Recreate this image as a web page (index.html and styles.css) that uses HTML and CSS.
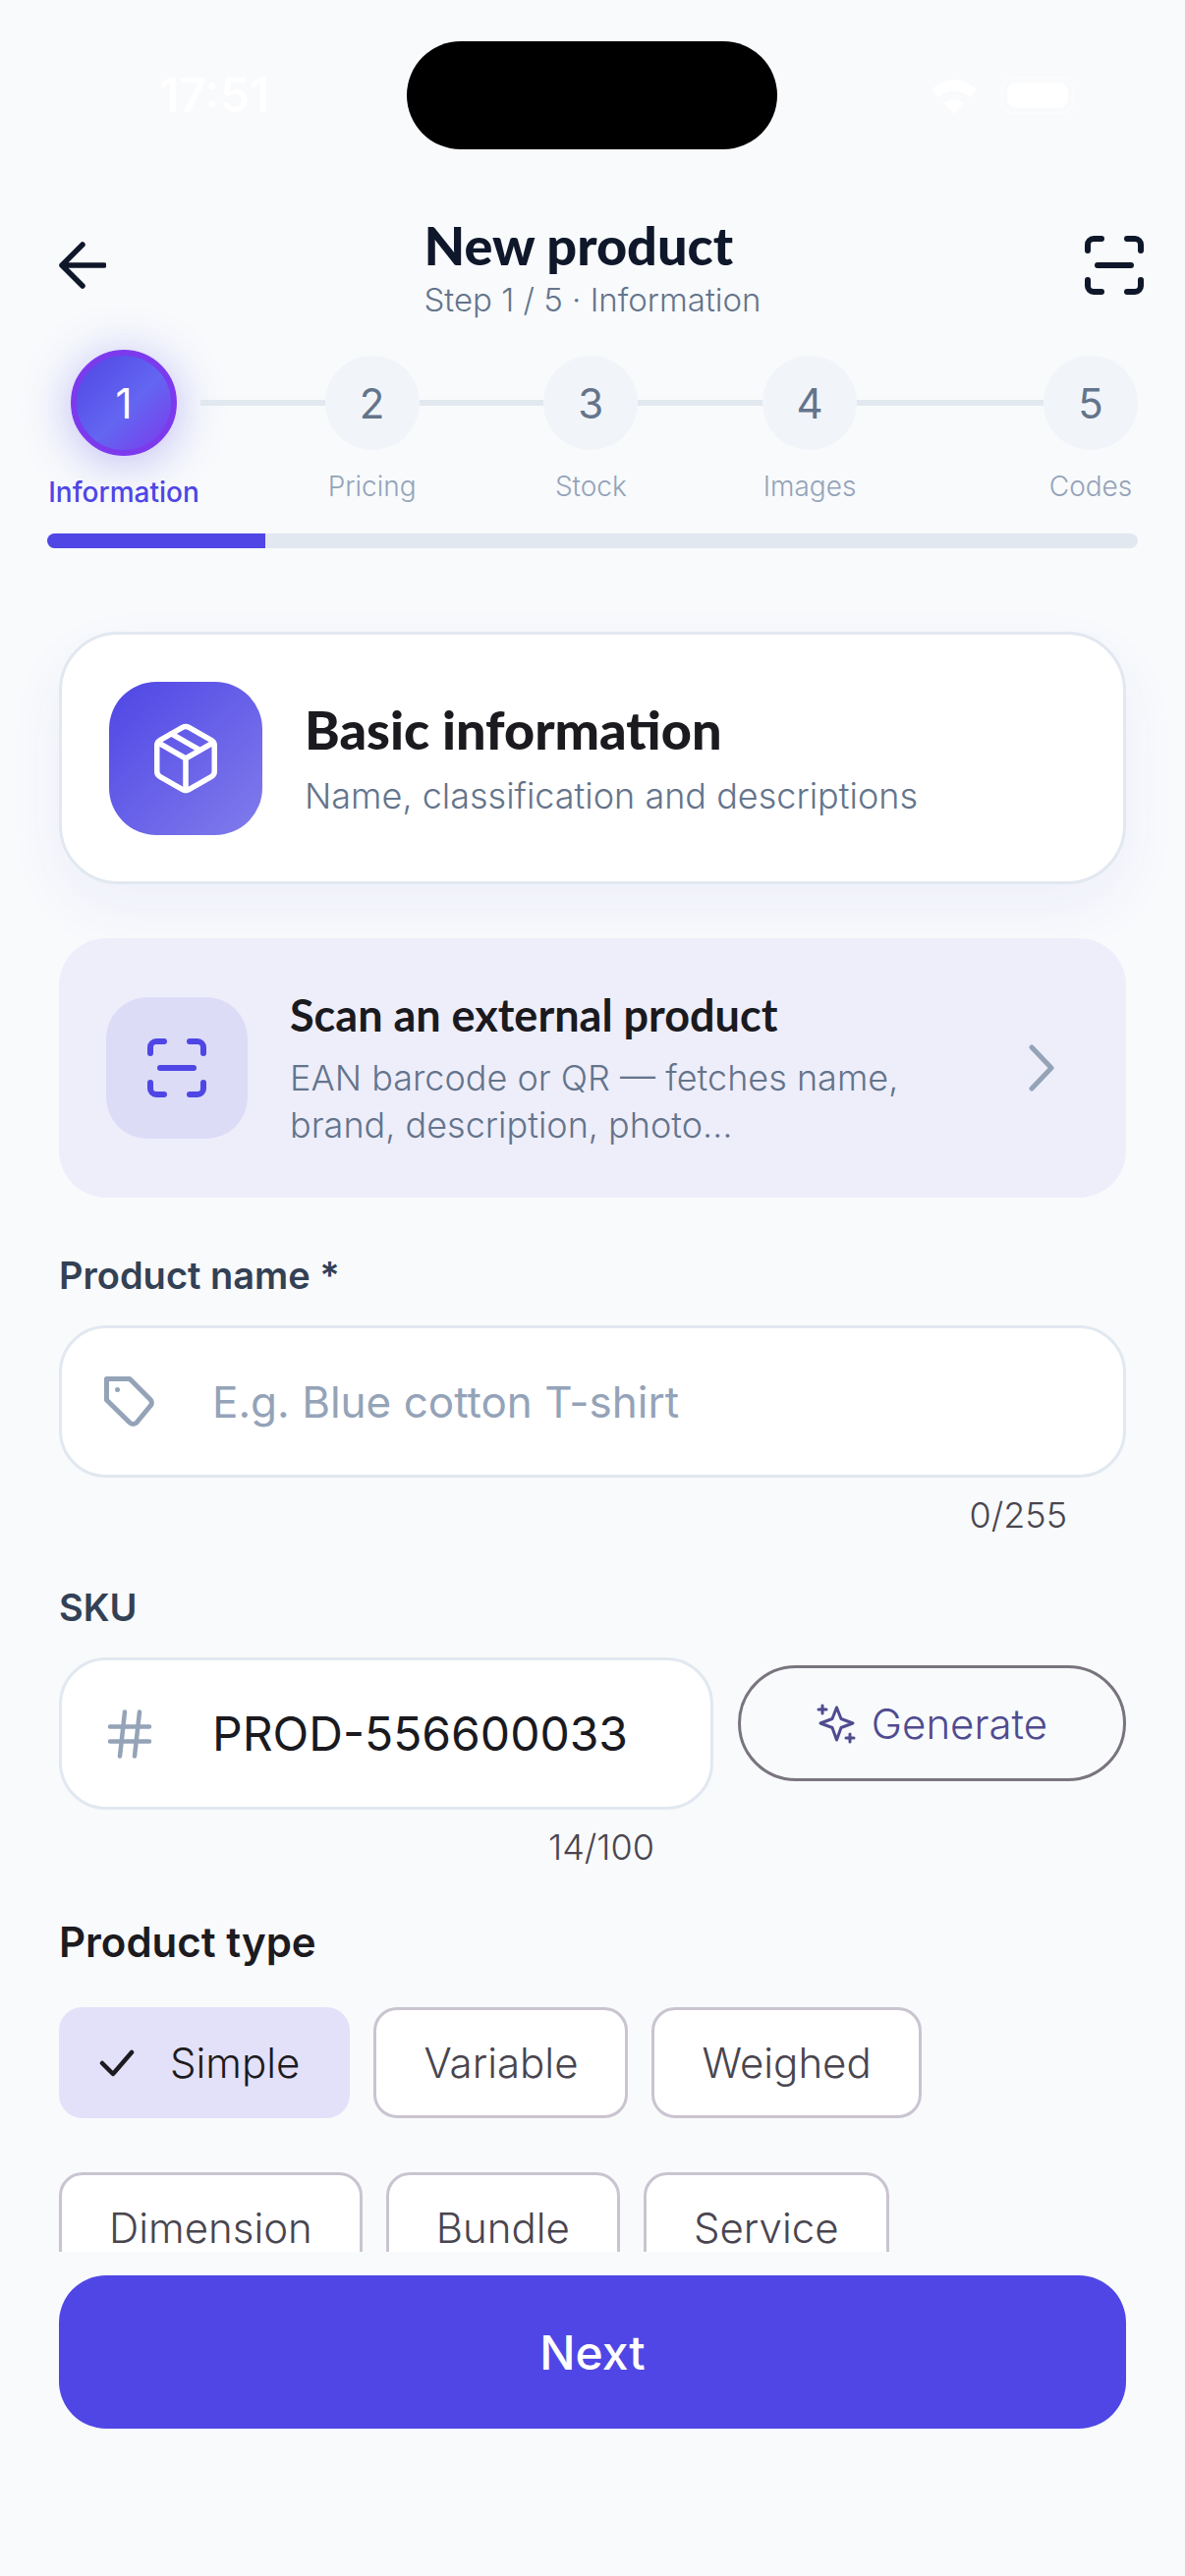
FILE: index.html
```html
<!DOCTYPE html>
<html lang="en">
<head>
    <meta charset="UTF-8">
    <meta name="viewport" content="width=device-width, initial-scale=1.0">
    <title>New product</title>
    <link rel="stylesheet" href="styles.css">
</head>
<body>
<div class="app">

    <div class="status">
        <span class="time">17:51</span>
        <div class="island"></div>
        <svg class="wifi" viewBox="0 0 50 38"><path d="M25 38 15 27q10-8 20 0zM9 21 2 13q23-20 46 0l-7 8q-16-13-32 0z" fill="#fff"/></svg>
        <div class="battery"><div class="battery-fill"></div></div>
    </div>

    <header class="topbar">
        <svg class="back" viewBox="0 0 48 48" fill="none" stroke="#0f172a" stroke-width="5.5" stroke-linecap="round" stroke-linejoin="round"><path d="M46 24H3M24 3 3 24l21 21"/></svg>
        <div class="titles">
            <h1>New product</h1>
            <p>Step 1 / 5 · Information</p>
        </div>
        <svg class="scan scan-top" viewBox="0 0 60 60" fill="none" stroke="currentColor" stroke-width="6" stroke-linecap="round"><path d="M3 15V9a6 6 0 0 1 6-6h8M43 3h8a6 6 0 0 1 6 6v6M57 45v6a6 6 0 0 1-6 6h-8M17 57H9a6 6 0 0 1-6-6v-6M13 30h34"/></svg>
    </header>

    <div class="steps">
        <div class="step step-on"><div class="dot">1</div><span>Information</span></div>
        <div class="line"></div>
        <div class="step"><div class="dot">2</div><span>Pricing</span></div>
        <div class="line"></div>
        <div class="step"><div class="dot">3</div><span>Stock</span></div>
        <div class="line"></div>
        <div class="step"><div class="dot">4</div><span>Images</span></div>
        <div class="line line-long"></div>
        <div class="step"><div class="dot">5</div><span>Codes</span></div>
    </div>
    <div class="progress"><div class="progress-fill"></div></div>

    <main class="content">
        <section class="intro">
            <div class="intro-icon">
                <svg viewBox="0 0 24 24" fill="none" stroke="#fff" stroke-width="1.7" stroke-linecap="round" stroke-linejoin="round"><path d="M21 8a2 2 0 0 0-1-1.73l-7-4a2 2 0 0 0-2 0l-7 4A2 2 0 0 0 3 8v8a2 2 0 0 0 1 1.73l7 4a2 2 0 0 0 2 0l7-4A2 2 0 0 0 21 16Z"/><path d="m3.3 7 8.7 5 8.7-5M12 22V12M7.5 4.27l9 5.15"/></svg>
            </div>
            <div>
                <h2>Basic information</h2>
                <p>Name, classification and descriptions</p>
            </div>
        </section>

        <section class="scan-card">
            <div class="scan-icon">
                <svg class="scan" viewBox="0 0 60 60" fill="none" stroke="currentColor" stroke-width="6" stroke-linecap="round"><path d="M3 15V9a6 6 0 0 1 6-6h8M43 3h8a6 6 0 0 1 6 6v6M57 45v6a6 6 0 0 1-6 6h-8M17 57H9a6 6 0 0 1-6-6v-6M13 30h34"/></svg>
            </div>
            <div class="scan-text">
                <h3>Scan an external product</h3>
                <p>EAN barcode or QR — fetches name,<br>brand, description, photo…</p>
            </div>
            <svg class="chevron" viewBox="0 0 28 48" fill="none" stroke="#94a3b8" stroke-width="5" stroke-linecap="round" stroke-linejoin="round"><path d="M4 3l20 21L4 45"/></svg>
        </section>

        <label class="label">Product name *</label>
        <div class="input">
            <svg class="input-icon" viewBox="0 0 60 60" fill="none" stroke="#94a3b8" stroke-width="5" stroke-linejoin="round"><path d="M6.5 6.5H30L51 27.5a4.500 4.500 0 0 1 0 6.500L37 51a5 5 0 0 1-7 0L6.500 28Z"/><circle cx="17.500" cy="17.500" r="2.500" fill="#94a3b8" stroke="none"/></svg>
            <span class="placeholder">E.g. Blue cotton T-shirt</span>
        </div>
        <div class="count">0/255</div>

        <label class="label label-sku">SKU</label>
        <div class="sku-row">
            <div class="sku-field">
                <div class="input">
                    <svg class="input-icon" viewBox="0 0 24 24" fill="none" stroke="#94a3b8" stroke-width="1.800" stroke-linecap="round"><path d="M4 9h16M4 15h16M10 3 8 21M16 3l-2 18"/></svg>
                    <span class="value">PROD-556600033</span>
                </div>
                <div class="count">14/100</div>
            </div>
            <button class="generate">
                <svg viewBox="0 0 42 42" fill="none" stroke="#4f4b8f" stroke-width="3" stroke-linecap="round" stroke-linejoin="round"><path d="M20.500 5 25 16.500 37 21 25 25.500 20.500 38 16 25.500 4 21 16 16.500Z"/><path d="M6 3v8M2 7h8M34 32v8M30 36h8"/></svg>
                Generate
            </button>
        </div>

        <label class="label label-type">Product type</label>
        <div class="chips">
            <div class="chip chip-on">
                <svg viewBox="0 0 36 28" fill="none" stroke="#1d1b20" stroke-width="4.500" stroke-linecap="round" stroke-linejoin="round"><path d="M3 14l11 11L33 3"/></svg>
                Simple
            </div>
            <div class="chip">Variable</div>
            <div class="chip">Weighed</div>
            <div class="chip">Dimension</div>
            <div class="chip">Bundle</div>
            <div class="chip">Service</div>
        </div>
    </main>

    <footer class="footer">
        <button class="next">Next</button>
    </footer>
</div>
</body>
</html>
```

FILE: styles.css
```css
* {
    box-sizing: border-box;
}

body {
    margin: 0;
    background: #f8fafc;
    font-family: Inter, "Liberation Sans", sans-serif;
}

h1, h2, h3, p {
    margin: 0;
}

.app {
    width: 1206px;
    height: 2622px;
    display: flex;
    flex-direction: column;
    overflow: hidden;
}

/* status bar */
.status {
    height: 152px;
    padding-top: 42px;
    display: flex;
    align-items: flex-start;
}

.time {
    margin: 30px 0 0 162px;
    width: 252px;
    font-size: 48px;
    line-height: 50px;
    font-weight: 600;
    color: #fff;
}

.island {
    width: 377px;
    height: 110px;
    border-radius: 55px;
    background: #000;
}

.wifi {
    width: 50px;
    height: 38px;
    margin: 36px 0 0 155px;
}

.battery {
    width: 74px;
    height: 38px;
    margin: 36px 0 0 23px;
    padding: 4px;
    border: 2px solid #fbfcfe;
    border-radius: 13px;
}

.battery-fill {
    height: 100%;
    background: #fff;
    border-radius: 9px;
}

/* header */
.topbar {
    margin-top: 68px;
    padding: 0 42px;
    display: grid;
    grid-template-columns: 1fr auto 1fr;
    height: 106px;
}

.back {
    width: 48px;
    height: 48px;
    margin: 26px 0 0 18px;
}

.titles {
    text-align: left;
}

.titles h1 {
    font-family: Lato, sans-serif;
    font-size: 54px;
    line-height: 60px;
    font-weight: 900;
    color: #0f172a;
}

.titles p {
    margin-top: 4px;
    font-size: 33px;
    line-height: 42px;
    font-weight: 300;
    color: #64748b;
}

.scan {
    width: 60px;
    height: 60px;
}

.scan-top {
    justify-self: end;
    margin-top: 20px;
    color: #0f172a;
}

/* stepper */
.steps {
    margin: 30px 48px 0;
    display: flex;
    align-items: flex-start;
}

.step {
    width: 96px;
    display: flex;
    flex-direction: column;
    align-items: center;
    flex-shrink: 0;
}

.dot {
    width: 96px;
    height: 96px;
    margin-top: 6px;
    border-radius: 50%;
    background: #f1f5f9;
    color: #64748b;
    font-size: 42px;
    font-weight: 400;
    display: flex;
    align-items: center;
    justify-content: center;
}

.step span {
    margin-top: 17px;
    font-size: 28px;
    line-height: 40px;
    font-weight: 300;
    color: #94a3b8;
    white-space: nowrap;
}

.step-on {
    width: 156px;
}

.step-on .dot {
    width: 108px;
    height: 108px;
    margin-top: 0;
    border: 6px solid #7c3aed;
    background: linear-gradient(135deg, #4f46e5, #6366f1 55%, #7c3aed);
    color: #fff;
    box-shadow: 0 6px 48px rgba(79, 70, 229, 0.35);
}

.step-on span {
    font-weight: 500;
    color: #4f46e5;
}

.line {
    flex: 2;
    height: 6px;
    margin-top: 51px;
    background: #e2e8f0;
}

.line-long {
    flex: 3;
}

.progress {
    margin: 22px 48px 0;
    height: 15px;
    border-radius: 8px;
    background: #e2e8f0;
    overflow: hidden;
}

.progress-fill {
    width: 20%;
    height: 100%;
    background: #4f46e5;
}

/* scrolling part */
.content {
    flex: 1;
    min-height: 0;
    overflow: hidden;
    padding: 85px 60px 0;
}

.intro {
    height: 257px;
    padding: 48px;
    display: flex;
    align-items: center;
    gap: 43px;
    background: #fff;
    border: 3px solid #e2e8f0;
    border-radius: 60px;
    box-shadow: 0 24px 60px rgba(79, 70, 229, 0.06);
}

.intro-icon {
    width: 156px;
    height: 156px;
    flex-shrink: 0;
    border-radius: 48px;
    background: linear-gradient(135deg, #4f46e5, #817cec);
    display: flex;
    align-items: center;
    justify-content: center;
}

.intro-icon svg {
    width: 78px;
    height: 78px;
}

.intro h2 {
    font-family: Lato, sans-serif;
    font-size: 54px;
    line-height: 64px;
    font-weight: 900;
    color: #1a1a1f;
}

.intro p {
    margin-top: 12px;
    font-size: 36px;
    line-height: 46px;
    font-weight: 300;
    color: #64748b;
}

.scan-card {
    margin-top: 55px;
    height: 264px;
    padding: 0 48px;
    display: flex;
    align-items: center;
    gap: 43px;
    background: #eeeefb;
    border-radius: 48px;
}

.scan-icon {
    width: 144px;
    height: 144px;
    flex-shrink: 0;
    border-radius: 42px;
    background: #dcdcf7;
    color: #4f46e5;
    display: flex;
    align-items: center;
    justify-content: center;
}

.scan-text {
    flex: 1;
}

.scan-text h3 {
    font-family: Lato, sans-serif;
    font-size: 45px;
    line-height: 56px;
    font-weight: 700;
    color: #1a1a1f;
}

.scan-text p {
    margin-top: 12px;
    font-size: 36px;
    line-height: 48px;
    font-weight: 300;
    color: #64748b;
    white-space: nowrap;
}

.chevron {
    width: 28px;
    height: 48px;
    flex-shrink: 0;
    margin-right: 24px;
}

/* form */
.label {
    display: block;
    margin-top: 54px;
    font-size: 38px;
    line-height: 50px;
    font-weight: 600;
    color: #334155;
}

.label-sku {
    margin-top: 47px;
}

.label-type {
    margin-top: 50px;
    font-size: 42px;
    color: #1c1b1f;
}

.input {
    margin-top: 26px;
    height: 155px;
    padding: 0 60px 0 39px;
    display: flex;
    align-items: center;
    gap: 54px;
    background: #fff;
    border: 3px solid #e2e8f0;
    border-radius: 48px;
}

.input-icon {
    width: 60px;
    height: 60px;
    flex-shrink: 0;
}

.placeholder {
    font-size: 44px;
    font-weight: 400;
    color: #94a3b8;
}

.value {
    flex: 1;
    min-width: 0;
    overflow: hidden;
    white-space: nowrap;
    font-size: 48px;
    color: #1a1a1f;
}

.count {
    margin-top: 16px;
    padding-right: 60px;
    text-align: right;
    font-size: 36px;
    line-height: 44px;
    font-weight: 300;
    color: #49454f;
}

.sku-row {
    display: flex;
    align-items: flex-start;
    gap: 25px;
}

.sku-field {
    width: 666px;
}

.generate {
    flex: 1;
    height: 118px;
    margin-top: 34px;
    display: flex;
    align-items: center;
    justify-content: center;
    gap: 14px;
    background: none;
    border: 3px solid #79747e;
    border-radius: 59px;
    font-family: inherit;
    font-size: 42px;
    font-weight: 300;
    color: #4f4b8f;
}

.generate svg {
    width: 42px;
    height: 42px;
}

.chips {
    margin-top: 41px;
    display: flex;
    flex-wrap: wrap;
    gap: 55px 24px;
}

.chip {
    height: 113px;
    padding: 0 48px;
    display: flex;
    align-items: center;
    gap: 36px;
    background: #fff;
    border: 3px solid #cac4d0;
    border-radius: 24px;
    font-size: 42px;
    font-weight: 300;
    color: #49454f;
}

.chip svg {
    width: 36px;
    height: 28px;
}

.chip-on {
    padding: 0 48px 0 38px;
    background: #e3e1f9;
    border-color: #e3e1f9;
    color: #1d1b20;
}

.footer {
    padding: 24px 60px 150px;
}

.next {
    width: 100%;
    height: 156px;
    border: 0;
    border-radius: 48px;
    background: #4f46e5;
    color: #fff;
    font-family: inherit;
    font-size: 48px;
    font-weight: 500;
}
```
